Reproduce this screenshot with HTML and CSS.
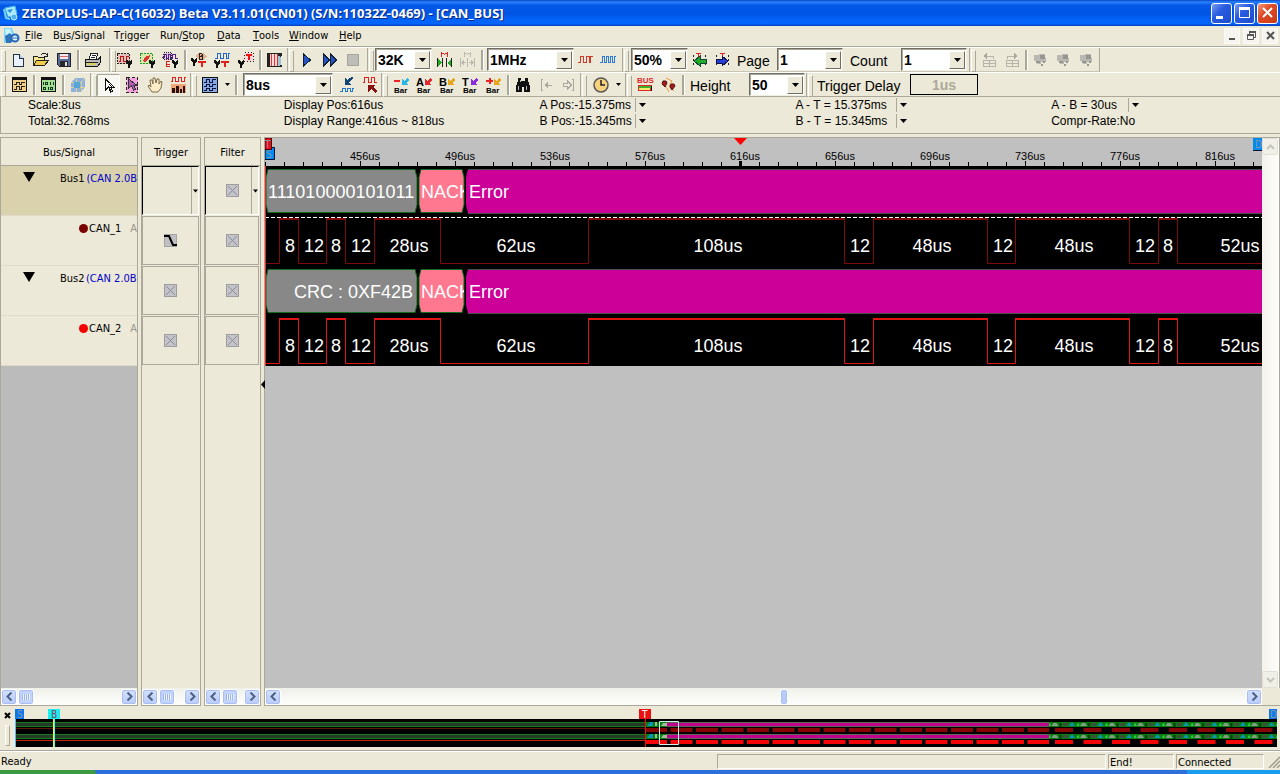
FILE: index.html
```html
<!DOCTYPE html>
<html lang="en">
<head>
<meta charset="utf-8">
<title>ZEROPLUS-LAP-C</title>
<link rel="stylesheet" href="styles.css">
</head>
<body>
<svg class="defs" aria-hidden="true">
  <symbol id="down" viewBox="0 0 7 4"><path d="M0 0h7L3.500 4z"/></symbol>
  <symbol id="left" viewBox="0 0 9 9"><path d="M6.500 .5l-4 4 4 4" fill="none" stroke="#4d6185" stroke-width="2"/></symbol>
  <symbol id="right" viewBox="0 0 9 9"><path d="M2.500 .5l4 4-4 4" fill="none" stroke="#4d6185" stroke-width="2"/></symbol>
  <symbol id="none" viewBox="0 0 13 13"><path fill="#c4c4c8" d="M0 0h13v13H0z"/><path d="M.5.5h12v12H.5z" fill="none" stroke="#777" stroke-dasharray="1 1"/><path d="M2 2l9 9M11 2l-9 9" stroke="#888c9c" fill="none"/></symbol>
  <symbol id="probe" viewBox="0 0 6 8"><path d="M0 0h1l2 2h1l1-2h1v3L4 5H2L0 3zM2 4h2v4H2z" fill="#111"/></symbol>
  <symbol id="arr" viewBox="0 0 8 8"><path d="M7 0L3 4 1 2v6h6L5 6l3-3z"/></symbol>
  <symbol id="chip" viewBox="0 0 16 16"><path d="M1 3h7v6H1zM6 2h6v5H6zM8 6h5v4H8zM4 8h4v4H4z" fill="#b9b8b2"/><path d="M7 3h5v4H7zM3 9h4v2H3zM10 9h2v2h-2zM8 12h2v2H8z" fill="#96958f"/></symbol>
  <pattern id="packets" width="28.500" height="5" patternUnits="userSpaceOnUse" x="1048" y="13"><path fill="#0a7d12" d="M0 0h29v5H0z"/><path fill="#3b4f3b" d="M0 1h5v3H0z"/><path fill="#0a94b8" d="M6 4l3-4 3 4z"/><path fill="#28e03c" d="M14 4V2l2-1v3z"/><path fill="#869b84" d="M17 4l2-3h3l2 3z"/><path fill="#053b08" d="M25 1h2v4h-2z"/></pattern>
</svg>

<header class="title">
  <svg width="18" height="18" viewBox="0 0 18 18"><path d="M3 4l10-2 2 8-9 3z" fill="#a9eafc" stroke="#48b6ea"/><path d="M2 5l2 9 4 1" fill="none" stroke="#74d4f8" stroke-width="2"/><path d="M5 6l6-1-3 4z" fill="#2590d8"/><circle cx="12" cy="13" r="3" fill="#4fb2f0" stroke="#bff3ff"/></svg>
  <h1>ZEROPLUS-LAP-C(16032) Beta V3.11.01(CN01) (S/N:11032Z-0469) - [CAN_BUS]</h1>
  <div class="winbtns">
    <button aria-label="Minimize"><svg width="20" height="20"><path d="M4 13h7v3H4z" fill="#fff"/></svg></button>
    <button aria-label="Maximize"><svg width="20" height="20"><path d="M4.500 5.500h10v9h-10z" fill="none" stroke="#fff"/><path d="M4 4h11v3H4z" fill="#fff"/></svg></button>
    <button class="close" aria-label="Close"><svg width="20" height="20"><path d="M5 5l9 9M14 5l-9 9" stroke="#fff" stroke-width="2"/></svg></button>
  </div>
</header>

<nav class="menu">
  <svg width="18" height="18" viewBox="0 0 18 18"><path d="M1 1h8l2 5-2 9-8 1z" fill="#7fd8f8"/><path d="M2 2h5l2 5-6 3z" fill="#c9f5ff"/><path d="M2 9l5-3 4 5-3 5H3z" fill="#3174ba"/><circle cx="12" cy="11" r="3.500" fill="#dff6ff" stroke="#2768b8" stroke-width="2"/><path d="M10 11h5" stroke="#2768b8"/></svg>
  <div class="items">
    <button><u>F</u>ile</button><button>B<u>u</u>s/Signal</button><button>T<u>r</u>igger</button><button>Run/<u>S</u>top</button><button><u>D</u>ata</button><button><u>T</u>ools</button><button><u>W</u>indow</button><button><u>H</u>elp</button>
  </div>
  <div class="mdi">
    <button aria-label="Minimize document"><svg width="14" height="14"><path d="M4 9h6v2H4z" fill="#555"/></svg></button>
    <button aria-label="Restore document"><svg width="14" height="14"><path d="M5.500 5V3.500h6v5H10M3.500 6.500h6v4h-6z" fill="none" stroke="#555"/><path d="M3 5h7v2H3zM5 2h7v2H5z" fill="#555"/></svg></button>
    <button aria-label="Close document"><svg width="14" height="14"><path d="M4 3l7 7M11 3l-7 7" stroke="#555" stroke-width="2"/></svg></button>
  </div>
</nav>

<div class="toolbars">
  <div class="row">
    <div class="band b1">
      <button class="ic" aria-label="New"><svg width="18" height="18"><path d="M4.500 3.500h6l4 4v8h-10z" fill="#eaf1ff" stroke="#234"/><path d="M10.500 3.500v4h4" fill="#b7cdf2" stroke="#234"/></svg></button>
      <button class="ic" aria-label="Open"><svg width="18" height="18"><path d="M1.500 14.500v-9h4l1 1h6v3" fill="#f6e68a" stroke="#222"/><path d="M1.500 14.500l3-5h12l-4 5z" fill="#eecb4b" stroke="#222"/><path d="M9 4c2-3 4-2 6 0m0-2v3h-3" fill="none" stroke="#222"/></svg></button>
      <button class="ic" aria-label="Save"><svg width="18" height="18"><path d="M2.500 2.500h13v13h-11l-2-2z" fill="#5b6b9c" stroke="#222"/><path d="M5 3h8v5H5z" fill="#f5e8e8"/><path d="M5 5.500h8" stroke="#d66"/><path d="M5 10h8v5H5z" fill="#282828"/><path d="M10 11h2v4h-2z" fill="#ddd"/></svg></button>
      <i class="sep"></i>
      <button class="ic" aria-label="Print"><svg width="18" height="18"><path d="M5 8l2-6h7l-2 6" fill="#fff" stroke="#222"/><path d="M1.500 8.500h12l3-3v6l-3 4h-12z" fill="#bbb" stroke="#111"/><path d="M2 11.500h12M14 9l2-3M8 4.500h4M7 6.500h4" stroke="#222"/><path d="M3 12h9v2H3z" fill="#d8cf5b"/></svg></button>
    </div>
    <div class="band b2">
      <button class="ic" aria-label="Trigger signal"><svg width="19" height="18"><path d="M2.500 2.500h12v10h-12z" fill="#e4c0b8" stroke="#222" stroke-dasharray="2 1"/><path d="M4 10.500h1.500v-5h3v5h3v-5h2" fill="none" stroke="#b11"/><use href="#probe" x="11" y="9" width="6" height="8"/></svg></button>
      <button class="ic" aria-label="Trigger edge"><svg width="19" height="18"><path d="M2.500 2.500h12v10h-12z" fill="#d7e8a8" stroke="#292" stroke-dasharray="2 1"/><path d="M5 10l2-4 5-2-1 4-4 3z" fill="#d33"/><use href="#probe" x="11" y="9" width="6" height="8"/></svg></button>
      <button class="ic" aria-label="Trigger enable"><svg width="19" height="18"><path d="M2.500 1.500h8v7h-8z" fill="#e2c8e2" stroke="#222" stroke-dasharray="1 1"/><path d="M1 6.500h2.500v-3h2v4h2v-4h2v4h2v-4h3v4h2" fill="none" stroke="#528"/><path d="M9 10.500H5.500v5H9M6 13.500h3" stroke="#d22" fill="none"/><use href="#probe" x="11" y="9" width="6" height="8"/></svg></button>
      <i class="sep"></i>
      <button class="ic" aria-label="Bus trigger"><svg width="19" height="18"><path d="M5 5l4-3h4l4 3-4 4H9z" fill="#e0b090"/><path d="M9.500 2.500h2l1 1-1 2h-2zM9.500 5.500h3v3h-3z" stroke="#222" fill="none"/><path d="M8 11h8M12 10v6" stroke="#d22" stroke-width="2"/><use href="#probe" x="1" y="7" width="6" height="8"/></svg></button>
      <button class="ic" aria-label="Waveform trigger"><svg width="19" height="18"><path d="M2 7.500h2.500v-5h3v5h3v-5h3v5h2v-5H17" stroke="#26c" fill="none"/><path d="M8 11h8M12 10v6" stroke="#d22" stroke-width="2"/><use href="#probe" x="1" y="9" width="6" height="8"/></svg></button>
      <button class="ic" aria-label="Trigger mark"><svg width="19" height="18"><path d="M8.500 1.500h9v9h-9z" fill="#f7dada" stroke="#222" stroke-dasharray="1 2"/><path d="M10 4h6M13 3v6" stroke="#e11" stroke-width="2"/><use href="#probe" x="2" y="9" width="6" height="8"/></svg></button>
      <i class="sep"></i>
      <button class="ic" aria-label="Sampling setup"><svg width="19" height="18"><path d="M2 2h3v14H2zM13 2h4v3h-1v9h1v2h-4z" fill="#222"/><path d="M5 4h8v10H5z" fill="#f6d8d8"/><path d="M6 3v12M9 3v12M12 3v12" stroke="#d33"/><path d="M13 5l3 1v8l-3 1z" fill="#9cc6d8"/><path d="M3 2.500h13M3 15.500h13" stroke="#222"/></svg></button>
    </div>
    <div class="band b3">
      <button class="ic" aria-label="Run"><svg width="18" height="18"><path d="M5.500 3v12l7-6z" fill="#2451c4" stroke="#123"/></svg></button>
      <button class="ic" aria-label="Repeat run"><svg width="18" height="18"><path d="M2.500 3v12l6-6zM9.500 3v12l6-6z" fill="#2451c4" stroke="#123"/></svg></button>
      <button class="ic" aria-label="Stop"><svg width="18" height="18"><path d="M3.500 3.500h11v11h-11z" fill="#bdbcb6" stroke="#a5a49c"/></svg></button>
    </div>
    <div class="band b4">
      <div class="combo w57"><select aria-label="Memory depth"><option>32K</option></select><span><svg width="7" height="4"><use href="#down"/></svg></span></div>
      <button class="ic m1" aria-label="Memory page"><svg width="19" height="18"><path d="M6.500 6V1.500l3 2 3-2V6" fill="none" stroke="#d22"/><path d="M2.500 7v9M7.500 7v9M11.500 7v9M16.500 7v9" stroke="#222"/><path d="M3 8l4 4-4 3zM16 8l-4 4 4 3z" fill="#2a2"/></svg></button>
      <button class="ic" aria-label="Memory fit"><svg width="19" height="18"><path d="M6.500 6V1.500l3 2 3-2V6M2.500 7v9M9.500 7v9M16.500 7v9M4 11.500h4M11 11.500h4" fill="none" stroke="#bbb9ae"/><path d="M3 11.500l3-3v6zM16 11.500l-3-3v6z" fill="#bbb9ae"/></svg></button>
      <i class="sep"></i>
      <div class="combo w87 m2"><select aria-label="Sampling frequency"><option>1MHz</option></select><span><svg width="7" height="4"><use href="#down"/></svg></span></div>
      <button class="ic" aria-label="Internal clock"><svg width="19" height="18"><path d="M2 11.500h2.500v-6h3v6h3v-6h3v6h1v-6H17" fill="none" stroke="#d43a2a"/></svg></button>
      <button class="ic" aria-label="External clock"><svg width="19" height="18"><path d="M1 11.500h2.500v-6h2v6h2v-6h2v6h2v-6h2v6h2v-6h1" fill="none" stroke="#2b78d8"/></svg></button>
    </div>
    <div class="band b5">
      <div class="combo w57"><select aria-label="Trigger position"><option>50%</option></select><span><svg width="7" height="4"><use href="#down"/></svg></span></div>
      <button class="ic" aria-label="Previous trigger"><svg width="19" height="18"><path d="M3.500 4v12M15.500 4v12" stroke="#222" stroke-dasharray="2 2"/><path d="M6 2.500h5M8.500 2v4" stroke="#d22"/><path d="M4 10l6-5v3h6v4h-6v3z" fill="#1fae2b" stroke="#143"/></svg></button>
      <button class="ic" aria-label="Next trigger"><svg width="19" height="18"><path d="M3.500 4v12M15.500 4v12" stroke="#222" stroke-dasharray="2 2"/><path d="M7 2.500h5M9.500 2v4" stroke="#d22"/><path d="M15 10L9 5v3H3v4h6v3z" fill="#2440d8" stroke="#114"/></svg></button>
      <label class="page" for="pg">Page</label>
      <div class="combo w66"><select id="pg"><option>1</option></select><span><svg width="7" height="4"><use href="#down"/></svg></span></div>
      <label class="count" for="cn">Count</label>
      <div class="combo w66"><select id="cn"><option>1</option></select><span><svg width="7" height="4"><use href="#down"/></svg></span></div>
    </div>
    <div class="band b6">
      <button class="ic" aria-label="Table back" disabled><svg width="18" height="18"><path d="M3.500 9.500h12v6h-12zM3 12.500h12M9.500 9v6M13.500 8V5.500H7" fill="none" stroke="#b6b4aa"/><path d="M3 5l4-3v6z" fill="#aaa89e"/></svg></button>
      <button class="ic" aria-label="Table forward" disabled><svg width="18" height="18"><path d="M3.500 9.500h12v6h-12zM3 12.500h12M9.500 9v6M4.500 8V5.500h7" fill="none" stroke="#b6b4aa"/><path d="M15 5l-4-3v6z" fill="#aaa89e"/></svg></button>
      <i class="sep"></i>
      <button class="ic" aria-label="Stack" disabled><svg width="16" height="16"><use href="#chip"/></svg></button>
      <button class="ic" aria-label="Compare" disabled><svg width="16" height="16"><use href="#chip"/></svg></button>
      <button class="ic" aria-label="Merge" disabled><svg width="16" height="16"><use href="#chip"/></svg></button>
    </div>
  </div>

  <div class="row low">
    <div class="band c1">
      <button class="ic" aria-label="Waveform view"><svg width="17" height="17"><path d="M1.500 1.500h14v14h-14z" fill="#f2d08a" stroke="#111"/><path d="M1 3h15" stroke="#111" stroke-width="2"/><path d="M3 8.500h2.500v-2h3v2h2v-2H14M3 13.500h2.500v-3h3v3h2v-3H14" fill="none" stroke="#222"/></svg></button>
      <i class="sep"></i>
      <button class="ic" aria-label="Listing view"><svg width="17" height="17"><path d="M1.500 1.500h14v14h-14z" fill="#a2df92" stroke="#111"/><path d="M1 3h15" stroke="#111" stroke-width="2"/><path d="M3.500 6v3M5.500 6.500h2v2h-2zM10.500 6v3M13.500 6v3M3.500 11.500h2v2h-2zM8.500 11v3M10.500 11.500h2v2h-2z" fill="none" stroke="#132"/></svg></button>
      <i class="sep"></i>
      <button class="ic" aria-label="Memory analyzer"><svg width="18" height="18"><path d="M2 6l4-4h10v9l-4 5H2z" fill="#8fb0de"/><path d="M2 6h10v10M12 6l4-4M2 11h14M7 3v13" fill="none" stroke="#ddd48c"/><path d="M5 6h6v6H5z" fill="#56a5d7"/></svg></button>
    </div>
    <div class="band c2">
      <button class="ic on" aria-label="Select"><svg width="16" height="18"><path d="M4.500 3v11l3-3 2 5 2-1-2-4h3.500z" fill="#fff" stroke="#111"/><path d="M8 8l3 3H8l2 4" fill="none" stroke="#111"/></svg></button>
      <button class="ic" aria-label="Zoom select"><svg width="18" height="18"><path d="M3.500 1.500h11v15h-11z" fill="#f3a0dc" stroke="#222" stroke-dasharray="3 2"/><path d="M5.500 3v9l3-2 2 4 2-1-2-4h3z" fill="#b65cb6" stroke="#333"/></svg></button>
      <button class="ic" aria-label="Hand"><svg class="soft" width="18" height="18"><path d="M6 16l-4-6 1-1 2 2-1-7 2 0 1 4V2h2l1 5 1-4 2 0v5l2-3 1 1-1 6-3 4z" fill="#fbedc8" stroke="#7c6a4a"/></svg></button>
      <button class="ic" aria-label="Statistics"><svg width="18" height="18"><path d="M2 5.500h1.500v-4h3v4h3v-4h3v4h3v-4H17" stroke="#d22" fill="none"/><path d="M2 8h15v9H2z" fill="#f0a778"/><path d="M3 12h3v5H3zM7 10h3v7H7zM11 13h2v4h-2zM14 10h2v7h-2z" fill="#2a1010"/></svg></button>
    </div>
    <div class="band c3">
      <button class="ic" aria-label="Wave mode"><svg width="18" height="18"><path d="M1.500 1.500h15v15h-15z" fill="#86a8e8" stroke="#111"/><path d="M3 6.500h2.500v-3h3v3h3v-3H15M3 10.500h2.500v-2h3v2h3v-2H15M3 14.500h2.500v-2h3v2h3v-2H15" fill="none" stroke="#113"/></svg></button>
      <button class="dd" aria-label="Wave mode list"><svg width="5" height="3"><use href="#down"/></svg></button>
      <i class="sep"></i>
      <div class="combo w90"><select aria-label="Time scale"><option>8us</option></select><span><svg width="7" height="4"><use href="#down"/></svg></span></div>
      <button class="ic m2" aria-label="Zoom in"><svg width="18" height="18"><path d="M2 15.500h2.500v-3h3v3h2v-3h3v3h2v-3H16" fill="none" stroke="#27c"/><path d="M14 1l1 1-4 4 2 3H7V2l2 2z" fill="#147"/></svg></button>
      <button class="ic" aria-label="Zoom out"><svg width="18" height="18"><path d="M2 6.500h1.500v-5h4v5h3v-5h3v5H16" fill="none" stroke="#d22"/><path d="M7 9h7l-2 2 4 4-2 2-4-4-3 3z" fill="#811"/></svg></button>
    </div>
    <div class="band c4">
      <button class="ic bar" aria-label="Delete bar"><svg width="19" height="18"><path d="M2 4h6v2H2z" fill="#e22"/><use href="#arr" x="9" y="1" width="8" height="8" fill="#29b7e8"/><text x="2" y="17">Bar</text></svg></button>
      <button class="ic bar" aria-label="A bar"><svg width="19" height="18"><text class="big" x="1" y="10">A</text><use href="#arr" x="9" y="1" width="8" height="8" fill="#e32a2a"/><text x="2" y="17">Bar</text></svg></button>
      <button class="ic bar" aria-label="B bar"><svg width="19" height="18"><text class="big" x="1" y="10">B</text><use href="#arr" x="9" y="1" width="8" height="8" fill="#e8a51c"/><text x="2" y="17">Bar</text></svg></button>
      <button class="ic bar" aria-label="T bar"><svg width="19" height="18"><text class="big" x="1" y="10">T</text><use href="#arr" x="9" y="1" width="8" height="8" fill="#8b2be0"/><text x="2" y="17">Bar</text></svg></button>
      <button class="ic bar" aria-label="Add bar"><svg width="19" height="18"><path d="M2 4h7v2H2zM5 2h2v6H5z" fill="#e22"/><use href="#arr" x="9" y="1" width="8" height="8" fill="#e8a51c"/><text x="2" y="17">Bar</text></svg></button>
      <i class="sep"></i>
      <button class="ic" aria-label="Find"><svg width="18" height="18"><path d="M4 2h3v3h4V2h3v3l2 5v6h-6v-5H8v5H2v-6l2-5z" fill="#111"/><path d="M4.500 10v4M12.500 10v4M6.500 4v2" stroke="#bbb"/></svg></button>
      <button class="ic" aria-label="Find previous" disabled><svg width="18" height="18"><path d="M6 3.500H4.500v11H6M8 9.500h7" fill="none" stroke="#aaa89e"/><path d="M7 9l4-4v8z" fill="#aaa89e"/></svg></button>
      <button class="ic" aria-label="Find next" disabled><svg width="18" height="18"><path d="M12 3.500h1.500v11H12M3.500 7.500h4V5l4 4-4 4v-2.500h-4z" fill="none" stroke="#aaa89e"/></svg></button>
    </div>
    <div class="band c5">
      <button class="ic" aria-label="Clock"><svg class="soft" width="18" height="18"><circle cx="9" cy="9" r="7" fill="#f6d27e" stroke="#555" stroke-width="1.500"/><path d="M9 4v5h4" fill="none" stroke="#222" stroke-width="1.500"/></svg></button>
      <button class="dd" aria-label="Clock list"><svg width="5" height="3"><use href="#down"/></svg></button>
    </div>
    <div class="band c6">
      <button class="ic bus" aria-label="Bus setup"><svg width="19" height="18"><text x="1" y="7">BUS</text><path d="M2 9h14v6H2z" fill="#e0262a"/><path d="M3 10h12v2H3z" fill="#3fae2b"/><path d="M3 12h11v2H3z" fill="#f5ec6a"/><path d="M15.500 10v5" stroke="#111"/></svg></button>
      <button class="ic" aria-label="Bus color"><svg class="soft" width="18" height="18"><path d="M6 2l6 3-3 5 5 5M2 8l5 4 2 4" fill="none" stroke="#ef9a3b"/><path d="M3 5h3l1 2-2 4-3-3zM11 8h3l1 2-3 4-2-3z" fill="#a8191c" stroke="#511"/></svg></button>
      <i class="sep"></i>
      <label class="height" for="ht">Height</label>
      <div class="combo w56"><select id="ht"><option>50</option></select><span><svg width="7" height="4"><use href="#down"/></svg></span></div>
    </div>
    <div class="band c7">
      <span class="tlabel">Trigger Delay</span>
      <button class="delay" disabled>1us</button>
    </div>
  </div>
</div>

<section class="info">
  <div><p>Scale:8us</p><p>Total:32.768ms</p></div>
  <div><p>Display Pos:616us</p><p>Display Range:416us ~ 818us</p></div>
  <div><p><span class="v95">A Pos:-15.375ms</span><button aria-label="A position"><svg width="7" height="4"><use href="#down"/></svg></button></p><p><span class="v95">B Pos:-15.345ms</span><button aria-label="B position"><svg width="7" height="4"><use href="#down"/></svg></button></p></div>
  <div><p><span class="v101">A - T = 15.375ms</span><button aria-label="A minus T"><svg width="7" height="4"><use href="#down"/></svg></button></p><p><span class="v101">B - T = 15.345ms</span><button aria-label="B minus T"><svg width="7" height="4"><use href="#down"/></svg></button></p></div>
  <div><p><span class="v77">A - B = 30us</span><button aria-label="A minus B"><svg width="7" height="4"><use href="#down"/></svg></button></p><p>Compr-Rate:No</p></div>
</section>

<main class="work">
  <section class="pane signals">
    <h2>Bus/Signal</h2>
    <div class="list">
      <div class="sig sel"><svg class="tri" width="12" height="10"><path d="M0 0h12L6 10z"/></svg><span class="bn">Bus1</span><span class="proto">(CAN 2.0B</span></div>
      <div class="sig"><i class="dot dark"></i><span class="cn">CAN_1</span><span class="ch">A</span></div>
      <div class="sig"><svg class="tri" width="12" height="10"><path d="M0 0h12L6 10z"/></svg><span class="bn">Bus2</span><span class="proto">(CAN 2.0B</span></div>
      <div class="sig"><i class="dot"></i><span class="cn">CAN_2</span><span class="ch">A</span></div>
    </div>
    <div class="blank"></div>
    <div class="hbar"><button aria-label="Scroll left"><svg width="9" height="9"><use href="#left"/></svg></button><i class="thumb"></i><button class="end" aria-label="Scroll right"><svg width="9" height="9"><use href="#right"/></svg></button></div>
  </section>

  <section class="pane trig">
    <h2>Trigger</h2>
    <div class="cell drop"><span></span><button aria-label="Trigger options"><svg width="5" height="4"><use href="#down"/></svg></button></div>
    <div class="cell"><svg width="13" height="13"><path fill="#c0c0c4" d="M0 0h13v13H0z"/><path d="M.5.5h12v12H.5z" fill="none" stroke="#888" stroke-dasharray="1 1"/><path d="M0 2h5l4 9h4" fill="none" stroke="#000" stroke-width="2"/></svg></div>
    <div class="cell"><svg width="13" height="13"><use href="#none"/></svg></div>
    <div class="cell"><svg width="13" height="13"><use href="#none"/></svg></div>
    <div class="fill"></div>
    <div class="hbar"><button aria-label="Scroll left"><svg width="9" height="9"><use href="#left"/></svg></button><i class="thumb"></i><button class="end" aria-label="Scroll right"><svg width="9" height="9"><use href="#right"/></svg></button></div>
  </section>

  <section class="pane filt">
    <h2>Filter</h2>
    <div class="cell drop"><span><svg width="13" height="13"><use href="#none"/></svg></span><button aria-label="Filter options"><svg width="5" height="4"><use href="#down"/></svg></button></div>
    <div class="cell"><svg width="13" height="13"><use href="#none"/></svg></div>
    <div class="cell"><svg width="13" height="13"><use href="#none"/></svg></div>
    <div class="cell"><svg width="13" height="13"><use href="#none"/></svg></div>
    <div class="fill"></div>
    <div class="hbar"><button aria-label="Scroll left"><svg width="9" height="9"><use href="#left"/></svg></button><i class="thumb"></i><button class="end" aria-label="Scroll right"><svg width="9" height="9"><use href="#right"/></svg></button></div>
  </section>

  <section class="pane wave">
    <svg class="split" width="4" height="9"><path d="M4 0v9L0 4.500z"/></svg>
    <div class="view">
      <div class="plot">
        <svg class="ruler" width="100%" height="28">
          <defs><pattern id="ticks" width="19" height="5" x="0" y="23" patternUnits="userSpaceOnUse"><path d="M0 1h1v4H0z"/></pattern></defs>
          <path fill="#008cf0" stroke="#013" d="M0 9.500h9.500v12H0z"/><text class="flag" x="1" y="20">S</text>
          <path fill="#f00a1e" stroke="#400" d="M0 0h6.500v11.500H0z"/><text class="flag" x="0" y="10">T</text>
          <rect x="0" y="23" width="100%" height="5" fill="url(#ticks)"/>
          <path d="M95 23h1v5h-1zM190 23h1v5h-1zM285 23h1v5h-1zM380 23h1v5h-1zM474 23h3v5h-3zM570 23h1v5h-1zM665 23h1v5h-1zM760 23h1v5h-1zM855 23h1v5h-1zM950 23h1v5h-1z"/>
          <path fill="#f00" d="M469 0h13l-6.500 7z"/>
          <g class="rt"><text x="100" y="22">456us</text><text x="195" y="22">496us</text><text x="290" y="22">536us</text><text x="385" y="22">576us</text><text x="480" y="22">616us</text><text x="575" y="22">656us</text><text x="670" y="22">696us</text><text x="765" y="22">736us</text><text x="860" y="22">776us</text><text x="955" y="22">816us</text></g>
          <path fill="#008cf0" d="M988 0h12v12h-12z"/><path d="M988 12.500h12" stroke="#013"/><text class="flag" x="990" y="10">D</text>
        </svg>
        <svg class="traces" width="100%" height="200">
          <defs>
            <clipPath id="cg"><path d="M0 0h151v50H0z"/></clipPath>
            <g id="bus"><path fill="#888" stroke="#146b1c" d="M3 3.500h147l2 8v27l-2 8H3l-2-8v-27z"/><path fill="#ff7890" stroke="#146b1c" d="M156 3.500h41l2 8v27l-2 8h-41l-2-8v-27z"/><path fill="#cc0098" d="M203 3h2800v44H203l-2-8V11z"/><path d="M203 3.500h2800M203 47.500h2800" stroke="#4a504a"/></g>
            <path id="low" d="M0 97.500h14.500V53M33.500 53v44.500h28V53M80.500 53v44.500h29V53M175.500 53v44.500h148V53M579.500 53v44.500h29V53M722.500 53v44.500h28V53M864.500 53v44.500h29V53M912.500 53v44.500H3000" fill="none"/>
            <path id="high" d="M14 53h20M61 53h20M109 53h67M323 53h257M608 53h115M750 53h115M893 53h20" fill="none" stroke-width="2"/>
          </defs>
          <use href="#bus"/><use href="#bus" y="100"/>
          <g class="bt"><g clip-path="url(#cg)"><text x="3" y="32">111010000101011</text></g><svg x="0" y="0" width="199" height="50"><text x="156" y="32">NACK</text></svg><text x="204" y="32">Error</text></g>
          <g class="bt"><text x="29" y="132">CRC : 0XF42B</text><svg x="0" y="100" width="199" height="50"><text x="156" y="32">NACK</text></svg><text x="204" y="132">Error</text></g>
          <g stroke="#7c0a0a"><use href="#low"/><use href="#high"/></g>
          <g stroke="#e01616"><use href="#low" y="100"/><use href="#high" y="100"/></g>
          <path d="M0 51.500h3000" stroke="#fff" stroke-dasharray="4 2"/>
          <g class="wt"><text x="25" y="86">8</text><text x="49" y="86">12</text><text x="71" y="86">8</text><text x="96" y="86">12</text><text x="144" y="86">28us</text><text x="251" y="86">62us</text><text x="453" y="86">108us</text><text x="595" y="86">12</text><text x="667" y="86">48us</text><text x="738" y="86">12</text><text x="809" y="86">48us</text><text x="880" y="86">12</text><text x="903" y="86">8</text><text x="975" y="86">52us</text></g>
          <g class="wt"><text x="25" y="186">8</text><text x="49" y="186">12</text><text x="71" y="186">8</text><text x="96" y="186">12</text><text x="144" y="186">28us</text><text x="251" y="186">62us</text><text x="453" y="186">108us</text><text x="595" y="186">12</text><text x="667" y="186">48us</text><text x="738" y="186">12</text><text x="809" y="186">48us</text><text x="880" y="186">12</text><text x="903" y="186">8</text><text x="975" y="186">52us</text></g>
          <path d="M.5 0v200" stroke="#f02020"/>
        </svg>
      </div>
      <div class="vbar"><button disabled aria-label="Scroll up"><svg width="9" height="6"><path d="M1 5l3.500-3.500L8 5" fill="none" stroke="#c5c4b8" stroke-width="2"/></svg></button><button disabled aria-label="Scroll down"><svg width="9" height="6"><path d="M1 1l3.500 3.500L8 1" fill="none" stroke="#c5c4b8" stroke-width="2"/></svg></button></div>
    </div>
    <div class="hwrap"><div class="hbar"><button aria-label="Scroll left"><svg width="9" height="9"><use href="#left"/></svg></button><i class="thumb slim"></i><button class="end" aria-label="Scroll right"><svg width="9" height="9"><use href="#right"/></svg></button></div></div>
  </section>
</main>

<section class="mini">
  <div class="side"><button aria-label="Close overview"><svg width="7" height="7"><path d="M1 1l5 5M6 1L1 6" stroke="#000" stroke-width="2"/></svg></button><i></i></div>
  <svg class="map" width="100%" height="38">
    <defs>
      <g id="band"><path d="M1 13h630v5H1z" fill="#263a29"/><path d="M1 13.500h630M1 17.500h630" stroke="#137a1c"/><path d="M630 13h404v5H630z" fill="#5d6659"/><path d="M650 14h384v3H650z" fill="#c0048e"/><path d="M631 13h20v5h-20z" fill="#0a7d12"/><path d="M632 17l3-4h3v4z" fill="#0a94b8"/><path d="M640 13h2v4h-2zM646 17l2-3h4v3z" fill="#9fbf9a"/><path d="M1034 13h229v5h-229z" fill="url(#packets)"/></g>
      <g id="dash"><path d="M630 21h404" stroke-width="4" stroke-dasharray="22 3.500"/><path d="M1040 21h223" stroke-width="4" stroke-dasharray="18 10.500"/></g>
    </defs>
    <path d="M0 10h1263v28H0z"/>
    <use href="#band"/><use href="#band" y="12"/>
    <path d="M1 19.500h630" stroke="#5e1408"/><path d="M1 31.500h630" stroke="#c32614"/>
    <use href="#dash" stroke="#860404"/><use href="#dash" y="12" stroke="#f40404"/>
    <path fill="#0a78ee" d="M0 0h9v10H0zM1254 0h9v10h-9z"/><path d="M.5 10v28" stroke="#58b8f0"/>
    <path fill="#18f0f0" d="M33 0h12v10H33z"/><path d="M38.500 10v28" stroke="#f4f43c"/><path d="M39.500 10v28" stroke="#48f0f0"/>
    <path fill="#e81010" d="M624 0h12v10h-12z"/><path d="M630.500 10v28" stroke="#e81010"/>
    <path d="M644.500 12.500h19v23h-19z" fill="none" stroke="#c8f4f0"/>
    <g class="mt"><text x="2" y="9">S</text><text class="b" x="36" y="9">B</text><text class="w" x="627" y="9">T</text><text x="1255" y="9">D</text></g>
  </svg>
</section>

<footer class="status"><span class="ready">Ready</span><span class="box"></span><span class="box end">End!</span><span class="box conn">Connected</span><svg width="14" height="14"><path d="M3 14L14 3M7 14l7-7M11 14l3-3" stroke="#a09d8c" stroke-width="1.500"/></svg></footer>
<div class="task"><i></i><b></b></div>
</body>
</html>
```

FILE: styles.css
```css
* { box-sizing: border-box; }
body { margin: 0; min-height: 100vh; display: flex; flex-direction: column; background: #ece9d8; color: #000; font: 11px/14px "DejaVu Sans Condensed", "DejaVu Sans", sans-serif; overflow: hidden; }
h1, h2, p { margin: 0; font-size: inherit; font-weight: normal; }
button { border: 0; padding: 0; margin: 0; background: none; color: inherit; font: inherit; display: flex; align-items: center; justify-content: center; }
svg { display: block; flex: none; }
.defs { position: absolute; width: 0; height: 0; }

.title { height: 26px; display: flex; align-items: center; padding: 0 2px 0 2px; background: linear-gradient(#0a48c8, #2a82fa 8%, #0558e8 20%, #0054e3 50%, #0464fa 80%, #0466ff 90%, #0440c0); }
.title h1 { flex: 1; padding-left: 2px; color: #fff; font: bold 13px/20px "Open Sans", "Noto Sans", sans-serif; text-shadow: 1px 1px 0 #0a2a80; }
.winbtns { display: flex; gap: 2px; }
.winbtns button { width: 21px; height: 21px; border: 1px solid #fff; border-radius: 3px; background: linear-gradient(135deg, #7a9cf0, #2a5ce0 40%, #1c4cd0); }
.winbtns .close { background: linear-gradient(135deg, #f09878, #e04a24 40%, #c83c18); }

.menu { height: 21px; display: flex; align-items: center; padding: 0 2px 1px 3px; border-bottom: 1px solid #aca899; }
.items { flex: 1; display: grid; grid-template-columns: 28px 61px 46px 57px 36px 36px 50px 1fr; padding-left: 4px; }
.items button { justify-content: flex-start; }
.mdi { display: flex; gap: 3px; }
.mdi button { width: 16px; height: 16px; background: #f5f4ee; border: 1px solid #fbfaf6; }

.toolbars { border-bottom: 1px solid #aca899; }
.row { display: flex; height: 25px; border-top: 1px solid #fff; }
.low { height: 24px; }
.band { position: relative; display: flex; align-items: center; border-right: 1px solid #aca899; }
.band::before { content: ""; position: absolute; left: 1px; top: 2px; width: 3px; height: 20px; border: 1px solid; border-color: #fff #aca899 #aca899 #fff; }
.row:not(.low) .band { border-bottom: 1px solid #c9c6b6; }
.b1 { padding: 0 5px 0 6px; }
.b2 { padding: 0 1px 0 3px; }
.b3 { padding: 0 3px 0 7px; }
.b4 { padding: 0 2px 0 7px; }
.b5 { padding: 0 2px 0 8px; }
.b6 { padding: 0 1px 0 7px; }
.c1 { padding: 0 1px 0 8px; }
.c2 { padding: 0 1px 0 6px; }
.c3 { padding: 0 0 0 7px; }
.c4 { padding: 0 0 0 8px; }
.c5 { padding: 0 1px 0 8px; }
.c6 { padding: 0 1px 0 8px; }
.c7 { padding: 0 0 0 10px; border: 0; }
.ic { width: 23px; height: 22px; flex: none; }
.ic svg { shape-rendering: crispEdges; }
.ic .soft { shape-rendering: auto; }
.ic.on { background: #f8f7f2; border: 1px solid; border-color: #aca899 #fff #fff #aca899; }
.dd { width: 12px; height: 22px; }
.sep { flex: none; width: 6px; height: 20px; display: flex; }
.sep::before { content: ""; width: 2px; margin-left: 2px; background: #aca899; border-right: 1px solid #fff; }
.m1 { margin-left: 1px; }
.m2 { margin-left: 2px; }
.combo { display: flex; flex: none; height: 23px; background: #fff; border: 1px solid; border-color: #716f64 #f1efe2 #f1efe2 #716f64; box-shadow: inset 1px 1px 0 #aca899; padding: 2px 1px 1px 2px; }
.combo select { flex: 1; min-width: 0; appearance: none; border: 0; background: transparent; color: #000; font: bold 14px/18px "Liberation Sans", Arial, sans-serif; padding: 0; margin: 0; }
.combo span { width: 16px; display: flex; align-items: center; justify-content: center; background: #ece9d8; border: 1px solid; border-color: #fff #716f64 #716f64 #fff; }
.w56 { width: 56px; }
.w57 { width: 57px; }
.w66 { width: 66px; }
.w87 { width: 87px; }
.c3 .combo { margin-left: 4px; }
.w90 { width: 90px; }
.band label, .tlabel { font: 14px/20px "Liberation Sans", Arial, sans-serif; padding-top: 2px; }
.page { padding-left: 3px; width: 43px; }
.count { padding-left: 7px; width: 58px; }
.height { padding-left: 4px; width: 63px; }
.tlabel { width: 93px; }
.delay { width: 68px; height: 21px; border: 1px solid #000; color: #aca899; font: bold 14px/18px "Liberation Sans", Arial, sans-serif; }
.bar text, .bus text { font: bold 8px "Liberation Sans", Arial, sans-serif; }
.bar text.big { font-size: 11px; }
.bus text { fill: #e0262a; }

.info { display: grid; grid-template-columns: repeat(5, 1fr); height: 37px; border-bottom: 1px solid #aca899; border-left: 1px solid #aca899; font: 12px/16px "Liberation Sans", Arial, sans-serif; }
.info > div { padding-left: 27px; }
.info p { display: flex; height: 16px; white-space: nowrap; }
.info p button { border-left: 1px solid #aca899; width: 14px; height: 14px; margin-top: 1px; }
.v95 { width: 95px; }
.v101 { width: 101px; }
.v77 { width: 77px; }

.work { flex: 1; display: flex; gap: 3px; padding-top: 3px; }
.pane { display: flex; flex-direction: column; border: 1px solid #aca899; min-width: 0; }
.pane h2 { height: 28px; line-height: 29px; text-align: center; border-bottom: 1px solid #aca899; }
.signals { width: 138px; }
.trig { width: 60px; }
.filt { width: 57px; }
.wave { flex: 1; position: relative; border-right: 0; }
.split { position: absolute; left: -4px; top: 242px; }
.list { overflow: hidden; }
.sig { display: flex; align-items: flex-start; height: 50px; padding-top: 6px; border-bottom: 1px solid #dedbcb; white-space: nowrap; overflow: hidden; }
.sel { background: #d9d2ad; }
.tri { margin: 0 25px 0 22px; }
.bn { width: 26px; }
.sel .bn { width: 29px; }
.proto { color: #0000c8; }
.dot { width: 9px; height: 9px; margin: 2px 1px 0 78px; border-radius: 50%; background: #f40000; flex: none; }
.dot.dark { background: #780000; }
.cn { width: 43px; }
.ch { color: #9a988c; }
.blank { flex: 1; background: #bbb; }
.fill { flex: 1; }
.cell { height: 49px; margin: 0 1px 1px 0; border: 1px solid #aca899; display: flex; align-items: center; justify-content: center; }
.drop { border-color: #000 #fff #fff #000; justify-content: stretch; align-items: stretch; }
.drop span { flex: 1; display: flex; align-items: center; justify-content: flex-end; padding-right: 12px; }
.drop button { width: 7px; border-left: 1px solid #aca899; }
.hbar { display: flex; align-items: center; height: 17px; background: linear-gradient(#f0f0ea, #fefefd); }
.hbar button, .thumb { flex: none; width: 16px; height: 16px; border: 1px solid #fff; border-radius: 3px; background: linear-gradient(#d3e0fd, #b9cbf8); box-shadow: inset 0 0 0 1px #a9bdf0; }
.thumb { display: flex; margin-left: 1px; background: repeating-linear-gradient(90deg, #9cb4ee 0 1px, #eef4fe 1px 2px) center / 8px 6px no-repeat, #c3d4fc; }
.thumb.slim { width: 8px; margin-left: 50%; background: #b9cbf8; }
.hbar .end { margin-left: auto; }
.view { flex: 1; display: flex; min-height: 0; }
.plot { flex: 1; min-width: 0; background: #c0c0c0; }
.ruler { overflow: hidden; }
.ruler text { font: 11px "Liberation Sans", Arial, sans-serif; text-anchor: middle; }
.ruler text.flag, .mt text { font: 10px "DejaVu Sans Condensed", "DejaVu Sans", sans-serif; fill: #8a94a8; text-anchor: start; }
.mt text.b { fill: #843c60; }
.mt text.w { fill: #fff; }
.traces { background: #000; }
.bt text, .wt text { font: 18px "Liberation Sans", Arial, sans-serif; fill: #fff; }
.wt text { text-anchor: middle; }
.vbar { width: 18px; display: flex; flex-direction: column; justify-content: space-between; background: linear-gradient(90deg, #f3f2ec, #fefefc); border-right: 1px solid #aca899; }
.vbar button { width: 16px; height: 17px; background: #f1f0e8; border: 1px solid #e2e0d4; border-radius: 2px; }
.hwrap { padding-right: 18px; }

.mini { display: flex; height: 45px; padding: 3px 3px 4px 0; border-bottom: 1px solid #aca899; }
.side { width: 15px; flex: none; display: flex; flex-direction: column; align-items: center; gap: 6px; padding-top: 3px; }
.side i { width: 5px; height: 22px; border: 1px solid; border-color: #fff #aca899 #aca899 #fff; }
.map { flex: 1; min-width: 0; }

.status { display: flex; height: 19px; border-top: 1px solid #fff; padding: 2px 0 1px 0; line-height: 16px; gap: 2px; }
.ready { width: 56%; padding-left: 1px; margin-right: -2px; }
.box { flex: 1; border: 1px solid; border-color: #aca899 #fff #fff #aca899; padding-left: 1px; }
.box.end { flex: none; width: 66px; }
.box.conn { flex: none; width: 88px; }
.task { display: flex; height: 4px; background: #2c6fdc; }
.task i { width: 96px; background: #3c9a42; border-radius: 0 3px 0 0; }
.task b { width: 93px; margin-left: auto; background: #189cee; }
```
